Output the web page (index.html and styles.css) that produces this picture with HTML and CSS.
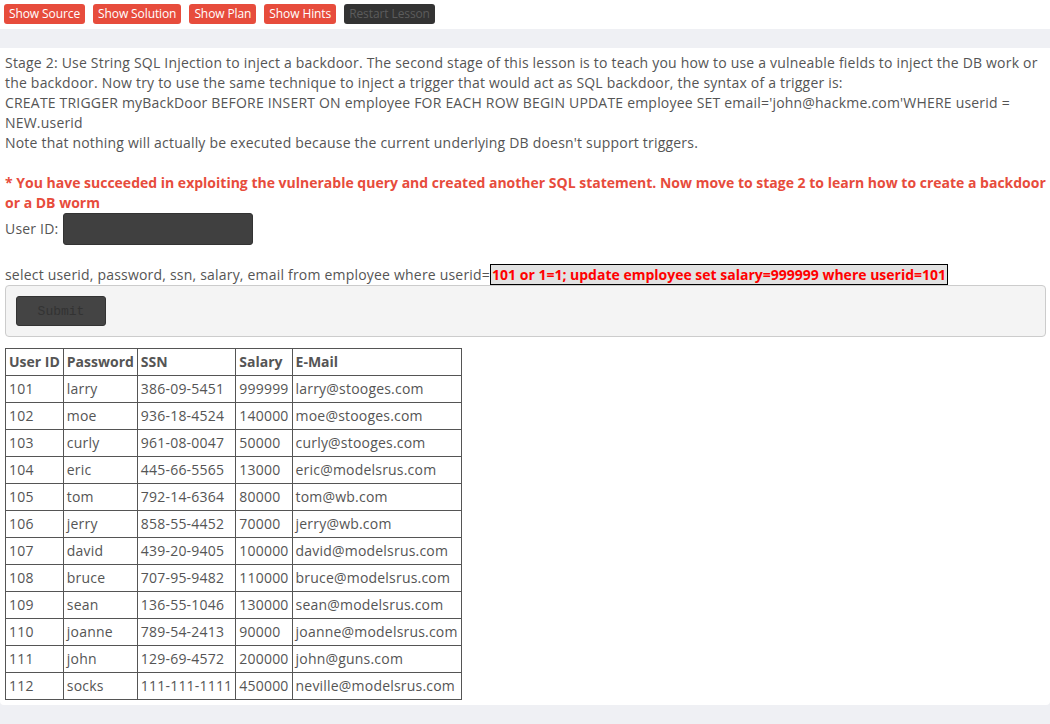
FILE: index.html
```html
<!DOCTYPE html>
<html>
<head>
<meta charset="utf-8">
<link rel="stylesheet" href="styles.css">
</head>
<body>
<div class="topbar">
  <button class="btn red">Show Source</button>
  <button class="btn red">Show Solution</button>
  <button class="btn red">Show Plan</button>
  <button class="btn red">Show Hints</button>
  <button class="btn dark">Restart Lesson</button>
</div>
<div class="band"></div>
<div class="main">
  <p class="intro">Stage 2: Use String SQL Injection to inject a backdoor. The second stage of this lesson is to teach you how to use a vulneable fields to inject the DB work or the backdoor. Now try to use the same technique to inject a trigger that would act as SQL backdoor, the syntax of a trigger is:<br>CREATE TRIGGER myBackDoor BEFORE INSERT ON employee FOR EACH ROW BEGIN UPDATE employee SET email='john@hackme.com'WHERE userid = NEW.userid<br>Note that nothing will actually be executed because the current underlying DB doesn't support triggers.</p>
  <p class="success">* You have succeeded in exploiting the vulnerable query and created another SQL statement. Now move to stage 2 to learn how to create a backdoor or a DB worm</p>
  <div class="userrow">User ID: <input class="uid" type="text"></div>
  <div class="query">select userid, password, ssn, salary, email from employee where userid=<span class="inj">101 or 1=1; update employee set salary=999999 where userid=101</span></div>
  <div class="panel"><button class="submit">Submit</button></div>
  <table class="results">
    <tr><th>User ID</th><th>Password</th><th>SSN</th><th>Salary</th><th>E-Mail</th></tr>
    <tr><td>101</td><td>larry</td><td>386-09-5451</td><td>999999</td><td>larry@stooges.com</td></tr>
    <tr><td>102</td><td>moe</td><td>936-18-4524</td><td>140000</td><td>moe@stooges.com</td></tr>
    <tr><td>103</td><td>curly</td><td>961-08-0047</td><td>50000</td><td>curly@stooges.com</td></tr>
    <tr><td>104</td><td>eric</td><td>445-66-5565</td><td>13000</td><td>eric@modelsrus.com</td></tr>
    <tr><td>105</td><td>tom</td><td>792-14-6364</td><td>80000</td><td>tom@wb.com</td></tr>
    <tr><td>106</td><td>jerry</td><td>858-55-4452</td><td>70000</td><td>jerry@wb.com</td></tr>
    <tr><td>107</td><td>david</td><td>439-20-9405</td><td>100000</td><td>david@modelsrus.com</td></tr>
    <tr><td>108</td><td>bruce</td><td>707-95-9482</td><td>110000</td><td>bruce@modelsrus.com</td></tr>
    <tr><td>109</td><td>sean</td><td>136-55-1046</td><td>130000</td><td>sean@modelsrus.com</td></tr>
    <tr><td>110</td><td>joanne</td><td>789-54-2413</td><td>90000</td><td>joanne@modelsrus.com</td></tr>
    <tr><td>111</td><td>john</td><td>129-69-4572</td><td>200000</td><td>john@guns.com</td></tr>
    <tr><td>112</td><td>socks</td><td>111-111-1111</td><td>450000</td><td>neville@modelsrus.com</td></tr>
  </table>
</div>
</body>
</html>
```
FILE: styles.css
```css
html, body {
  margin: 0;
  padding: 0;
  background: #eff0f4;
  font-family: "Open Sans", "Liberation Sans", sans-serif;
  font-size: 14px;
  line-height: 20px;
  color: #555;
}
.topbar {
  background: #fff;
  height: 29px;
  box-sizing: border-box;
  padding: 4px 4px 0;
  display: flex;
  gap: 8px;
}
.btn {
  font-family: "Open Sans", "Liberation Sans", sans-serif;
  font-size: 12px;
  line-height: 20px;
  height: 20px;
  padding: 0 5px;
  border: none;
  border-radius: 3px;
  cursor: pointer;
  letter-spacing: -0.1px;
}
.btn.red {
  background: #e74c3c;
  color: #fff;
}
.btn.dark {
  background: #333;
  color: #5c5c5c;
}
.band {
  height: 19px;
}
.main {
  background: #fff;
  padding: 5px 4px 5px 5px;
  border-radius: 0 0 4px 4px;
  letter-spacing: 0.2px;
}
.intro {
  margin: 0;
}
.success {
  margin: 20px 0 0;
  color: #e74c3c;
  font-weight: bold;
  letter-spacing: 0;
}
.userrow {
  display: flex;
  align-items: center;
  gap: 5px;
  height: 32px;
}
.uid {
  width: 190px;
  height: 32px;
  box-sizing: border-box;
  background: #404040;
  border: 1px solid #333;
  border-radius: 3px;
  margin: 0;
}
.query {
  margin-top: 19px;
  line-height: 21px;
}
.inj {
  background: #e2e2e2;
  border: 1px solid #000;
  color: #f00;
  font-weight: bold;
  padding: 0 1px;
  letter-spacing: 0;
}
.panel {
  background: #f4f4f4;
  border: 1px solid #ccc;
  border-radius: 4px;
  padding: 10px;
}
.submit {
  width: 90px;
  height: 30px;
  background: #444;
  border: 1px solid #333;
  border-radius: 3px;
  color: #333;
  font-family: "Liberation Mono", monospace;
  font-size: 13px;
  letter-spacing: 0;
  margin: 0;
  display: block;
}
.results {
  margin-top: 11px;
  border-collapse: collapse;
}
.results th, .results td {
  border: 1px solid #555;
  padding: 3px;
  text-align: left;
  white-space: nowrap;
  line-height: 20px;
}
.results th {
  font-weight: bold;
  letter-spacing: 0;
}
```
